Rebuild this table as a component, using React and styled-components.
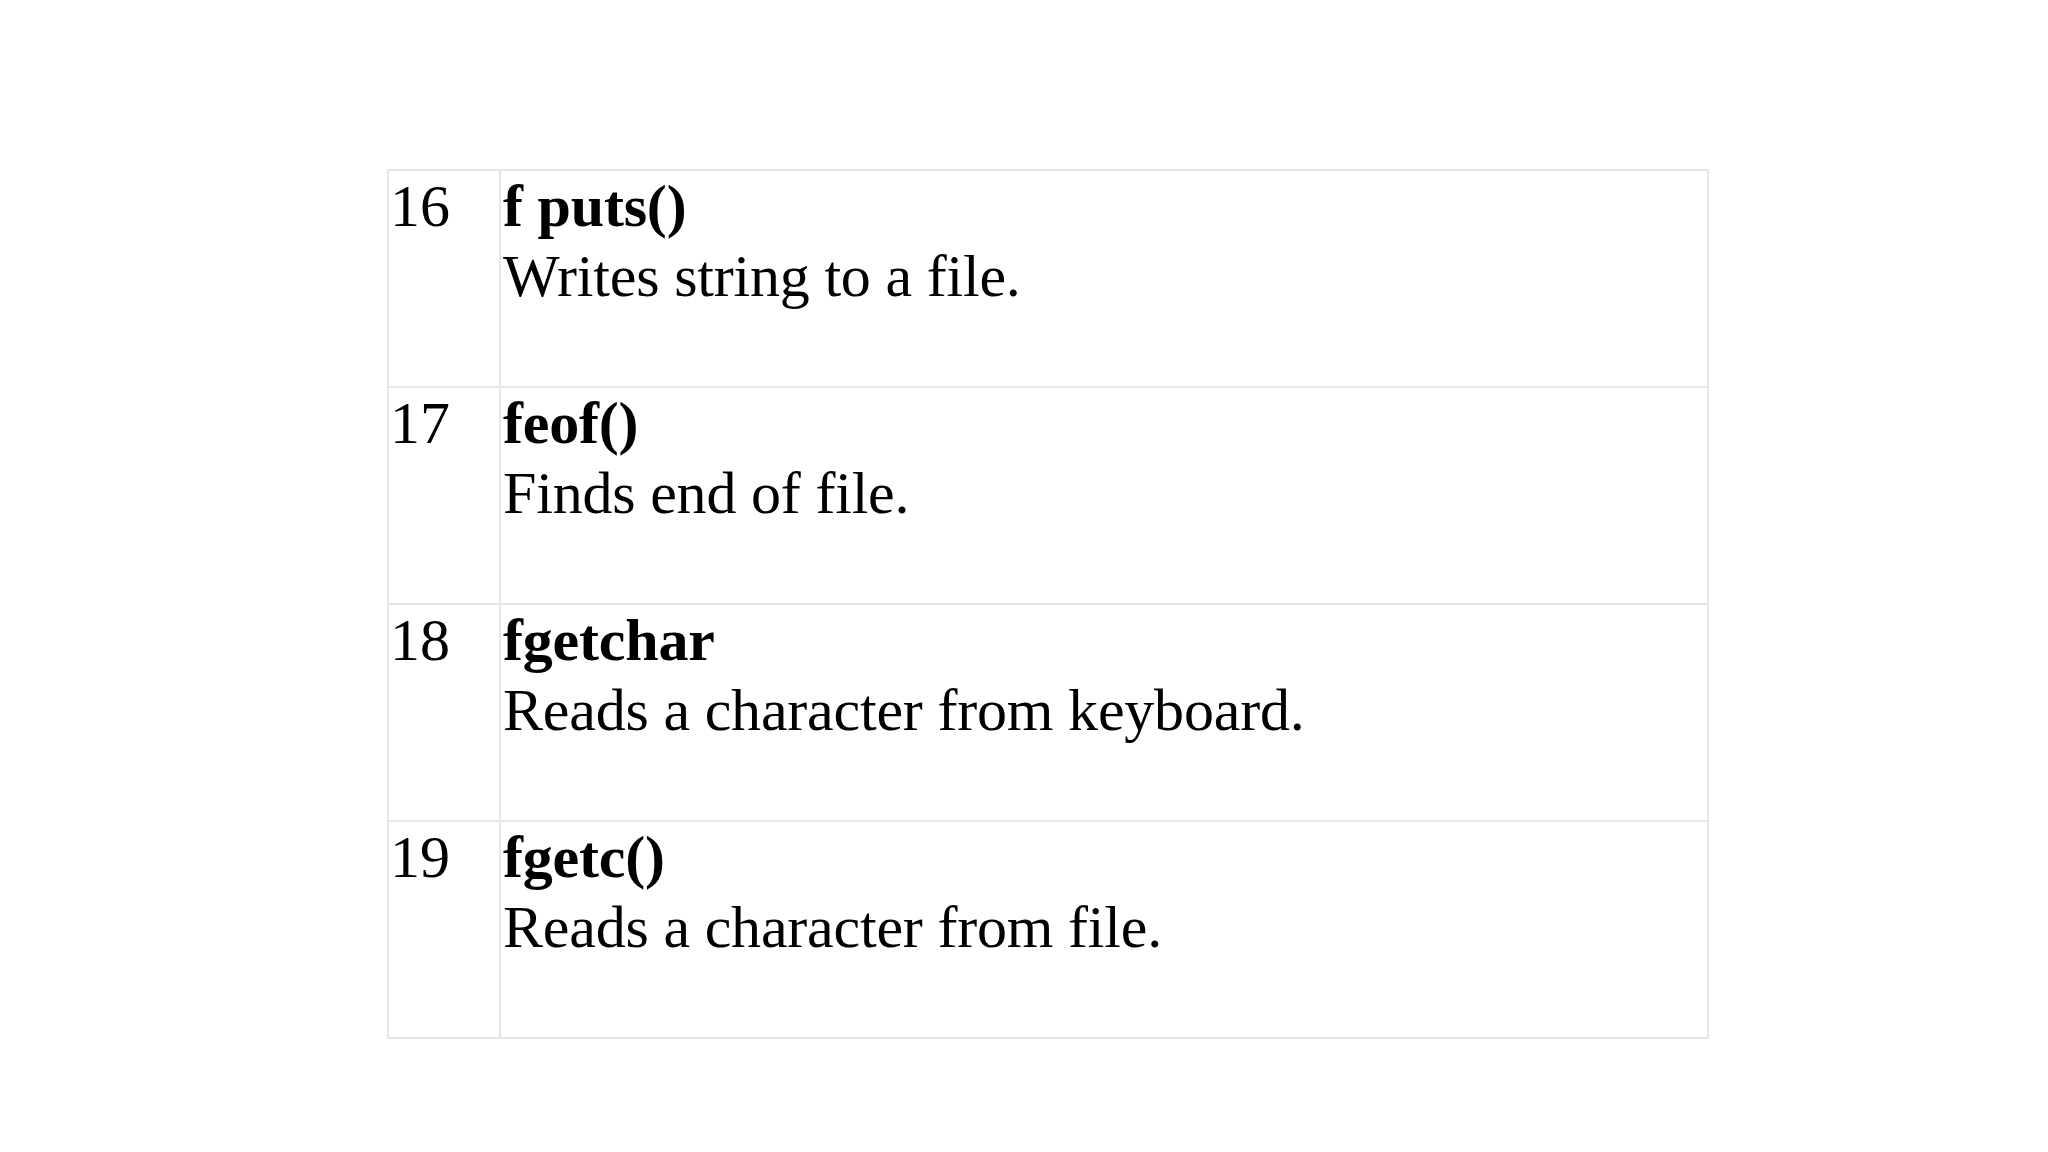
import React from "react";
import styled, { createGlobalStyle } from "styled-components";

const GlobalStyle = createGlobalStyle`
  html, body {
    margin: 0;
    padding: 0;
    background: #ffffff;
  }
`;

const Page = styled.div`
  width: 2048px;
  height: 1152px;
  box-sizing: border-box;
  padding: 169px 0 0 387px;
  background: #ffffff;
  font-family: "Liberation Serif", "Times New Roman", serif;
  color: #000000;
`;

const Table = styled.div`
  width: 1322px;
  box-sizing: border-box;
  border: 2px solid #e6e6e6;
`;

const Row = styled.div`
  display: grid;
  grid-template-columns: 112px 1fr;
  height: ${(p) => (p.last ? "215px" : "217px")};
  box-sizing: border-box;
  border-bottom: ${(p) => (p.last ? "none" : "2px solid #e6e6e6")};
`;

const NumCell = styled.div`
  border-right: 2px solid #e6e6e6;
  padding: 0 0 0 1px;
  font-size: 60px;
  line-height: 70px;
`;

const InfoCell = styled.div`
  padding: 0 0 0 2px;
  font-size: 60px;
  line-height: 70px;
  letter-spacing: -0.2px;
`;

const FuncName = styled.div`
  font-weight: 700;
`;

const FuncDesc = styled.div`
  font-weight: 400;
`;

const rows = [
  { no: 16, name: "f puts()", desc: "Writes string to a file." },
  { no: 17, name: "feof()", desc: "Finds end of file." },
  { no: 18, name: "fgetchar", desc: "Reads a character from keyboard." },
  { no: 19, name: "fgetc()", desc: "Reads a character from file." },
];

const App = () => {
  return (
    <>
      <GlobalStyle />
      <Page>
        <Table>
          {rows.map((r, i) => (
            <Row key={r.no} last={i === rows.length - 1}>
              <NumCell>{r.no}</NumCell>
              <InfoCell>
                <FuncName>{r.name}</FuncName>
                <FuncDesc>{r.desc}</FuncDesc>
              </InfoCell>
            </Row>
          ))}
        </Table>
      </Page>
    </>
  );
};

export default App;
